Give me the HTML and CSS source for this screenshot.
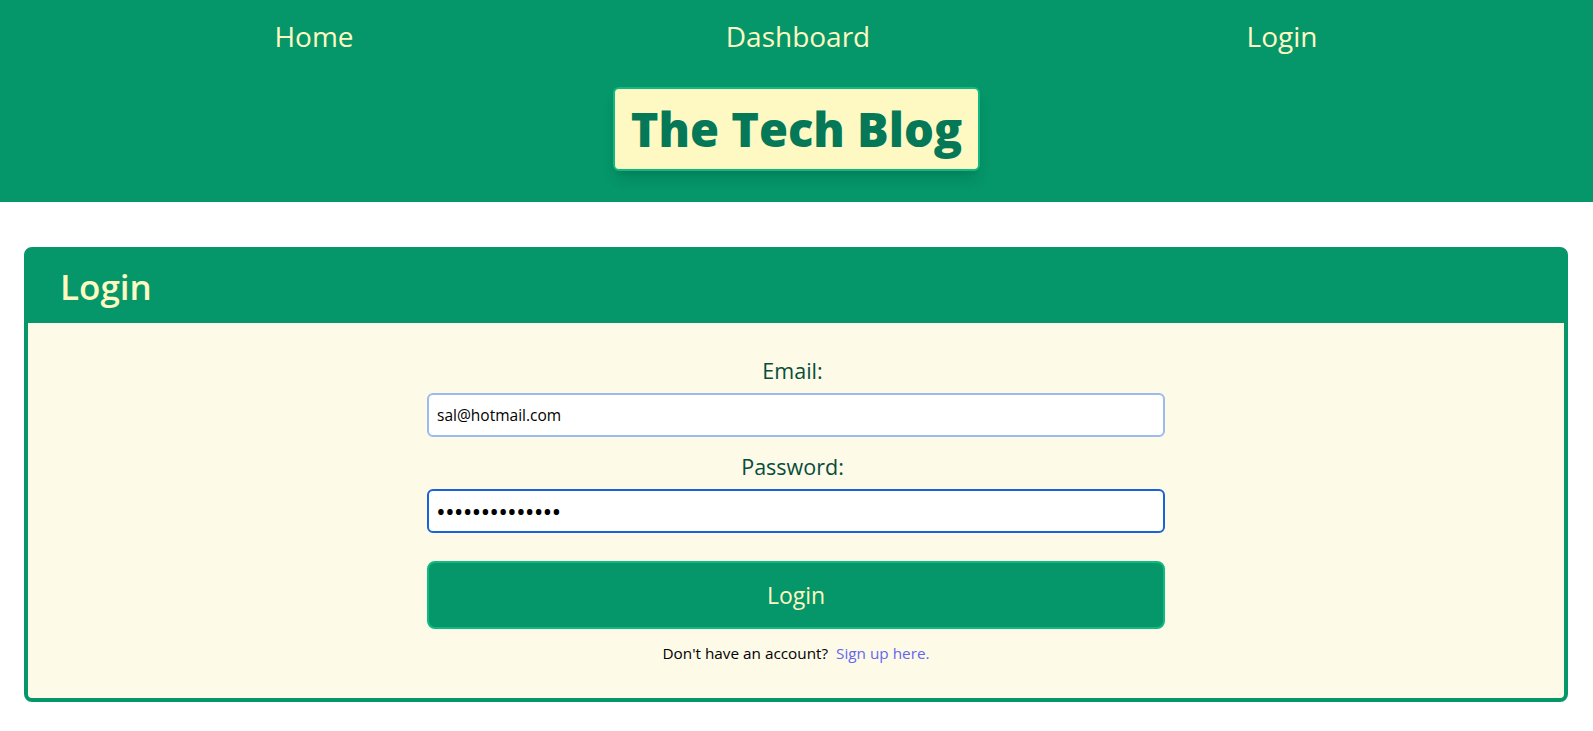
FILE: index.html
```html
<!DOCTYPE html>
<html lang="en">
<head>
<meta charset="utf-8">
<title>The Tech Blog</title>
<link rel="stylesheet" href="styles.css">
</head>
<body>
<header class="site-header">
  <nav class="nav">
    <a class="nav-link" href="#">Home</a>
    <a class="nav-link" href="#">Dashboard</a>
    <a class="nav-link" href="#">Login</a>
  </nav>
  <div class="brand-wrap">
    <h1 class="brand">The Tech Blog</h1>
  </div>
</header>
<main class="main">
  <section class="card">
    <h2 class="card-title">Login</h2>
    <div class="card-body">
      <form class="login-form">
        <label class="field-label" for="email">Email:</label>
        <input class="field-input" id="email" type="email" value="sal@hotmail.com">
        <label class="field-label field-label-gap" for="password">Password:</label>
        <input class="field-input field-input-focus" id="password" type="password" value="aaaaaaaaaaaaaa" autofocus>
        <button class="login-btn" type="button">Login</button>
        <p class="signup">Don't have an account?&nbsp; <a class="signup-link" href="#">Sign up here.</a></p>
      </form>
    </div>
  </section>
</main>
</body>
</html>
```
FILE: styles.css
```css
* { box-sizing: border-box; }
html, body { margin: 0; padding: 0; }
body {
  background: #ffffff;
  font-family: "Open Sans", "Noto Sans", sans-serif;
}
.site-header {
  background: #059669;
  padding: 18px 0 31px;
}
.nav {
  display: grid;
  grid-template-columns: repeat(3, 1fr);
  padding: 0 69px 0 72px;
}
.nav-link {
  text-align: center;
  color: #fef9c3;
  text-decoration: none;
  font-size: 28px;
  line-height: 36px;
}
.brand-wrap {
  display: flex;
  justify-content: center;
  margin-top: 33px;
}
.brand {
  margin: 0;
  background: #fef9c3;
  color: #047857;
  border: 2px solid #10b981;
  border-radius: 6px;
  padding: 16px 16px;
  font-size: 47px;
  line-height: 48px;
  font-weight: 800;
  box-shadow: 0 10px 15px -3px rgba(0,0,0,0.12), 0 4px 6px -4px rgba(0,0,0,0.12);
}
.main {
  padding: 45px 25px 30px 24px;
}
.card {
  background: #059669;
  border: 4px solid #059669;
  border-radius: 8px;
}
.card-title {
  margin: 0;
  padding: 16px 32px;
  font-size: 35px;
  line-height: 40px;
  font-weight: 600;
  color: #fef9c3;
}
.card-body {
  background: #fefae8;
  padding: 34px 0 33px;
  display: flex;
  justify-content: center;
  border-radius: 0 0 4px 4px;
}
.login-form {
  width: 738px;
  display: flex;
  flex-direction: column;
  align-items: stretch;
}
.field-label {
  display: block;
  text-align: center;
  color: #064e3b;
  font-size: 21.5px;
  line-height: 28px;
  margin-bottom: 8px;
  padding-right: 7px;
}
.field-label-gap { margin-top: 16px; }
.field-input {
  height: 44px;
  border: 2px solid #9bbaf0;
  border-radius: 6px;
  background: #ffffff;
  padding: 0 8px;
  font-family: "Open Sans", sans-serif;
  font-size: 15.5px;
  color: #000000;
  outline: none;
}
.field-input-focus {
  border-color: #1a62d8;
  font-size: 26px;
  letter-spacing: -0.9px;
  padding-left: 7px;
  caret-color: #000000;
}
.login-btn {
  margin-top: 28px;
  height: 68px;
  background: #059669;
  border: 2px solid #10b981;
  border-radius: 8px;
  color: #fef9c3;
  font-family: "Open Sans", sans-serif;
  font-size: 23px;
  cursor: pointer;
}
.signup {
  margin: 12px 0 0;
  text-align: center;
  font-size: 15.3px;
  line-height: 24px;
  color: #000000;
}
.signup-link {
  color: #6366f1;
  text-decoration: none;
}
```
